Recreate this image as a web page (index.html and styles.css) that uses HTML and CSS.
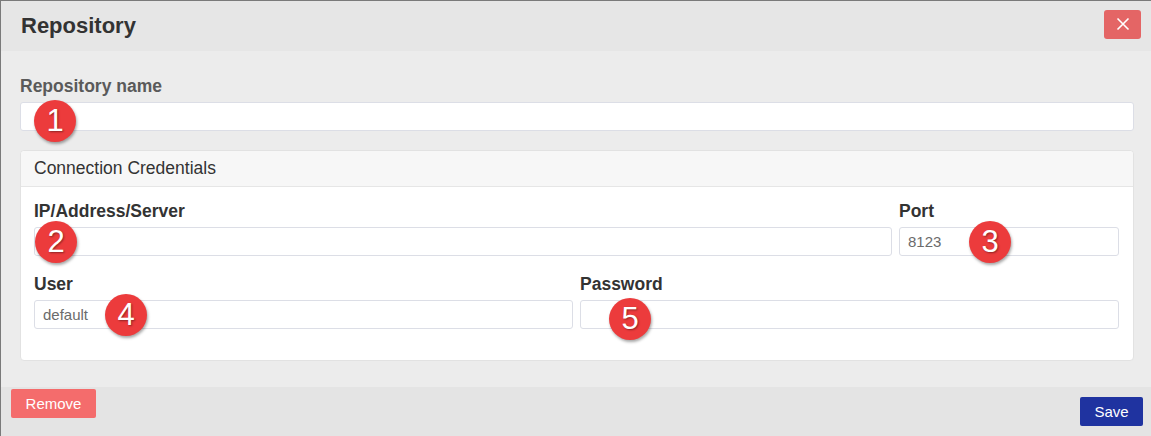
FILE: index.html
```html
<!DOCTYPE html>
<html lang="en">
<head>
    <meta charset="UTF-8">
    <title>Repository</title>
    <link rel="stylesheet" href="styles.css">
</head>
<body>
<div class="modal">
    <div class="modal-header">
        <h2>Repository</h2>
        <button class="close-btn" aria-label="Close">
            <svg width="14" height="14" viewBox="0 0 14 14"><path d="M1.5 1.5 L12.5 12.5 M12.5 1.5 L1.5 12.5" stroke="#fff" stroke-width="1.6" fill="none"/></svg>
        </button>
    </div>

    <div class="modal-body">
        <label class="field-label muted" for="repoName">Repository name</label>
        <input class="field" id="repoName" type="text">

        <div class="panel">
            <div class="panel-heading">Connection Credentials</div>
            <div class="panel-body">
                <div class="row row-server">
                    <div>
                        <label class="field-label" for="server">IP/Address/Server</label>
                        <input class="field" id="server" type="text">
                    </div>
                    <div>
                        <label class="field-label" for="port">Port</label>
                        <input class="field" id="port" type="text" placeholder="8123">
                    </div>
                </div>
                <div class="row row-user">
                    <div>
                        <label class="field-label" for="user">User</label>
                        <input class="field" id="user" type="text" placeholder="default">
                    </div>
                    <div>
                        <label class="field-label" for="password">Password</label>
                        <input class="field" id="password" type="password">
                    </div>
                </div>
            </div>
        </div>
    </div>

    <div class="modal-footer">
        <button class="btn btn-remove">Remove</button>
        <button class="btn btn-save">Save</button>
    </div>

    <!-- numbered callouts -->
    <span class="marker m1">1</span>
    <span class="marker m2">2</span>
    <span class="marker m3">3</span>
    <span class="marker m4">4</span>
    <span class="marker m5">5</span>
</div>
</body>
</html>
```

FILE: styles.css
```css
body {
    margin: 0;
    font-family: "Liberation Sans", Arial, sans-serif;
    background-color: #ececec;
}

.modal {
    position: relative;
    height: 435px;
    border-left: 1px solid #7a7a7a;
    border-top: 1px solid #7a7a7a;
    display: flex;
    flex-direction: column;
    overflow: hidden;
}

.modal-header {
    height: 50px;
    background-color: #e6e6e6;
    display: flex;
    align-items: center;
    justify-content: space-between;
    padding: 0 10px 0 20px;
}

.modal-header h2 {
    margin: 0;
    font-size: 22px;
    font-weight: bold;
    color: #333;
}

.close-btn {
    width: 37px;
    height: 29px;
    margin-top: -4px;
    border: none;
    border-radius: 3px;
    background-color: #e46565;
    display: flex;
    align-items: center;
    justify-content: center;
    padding: 0;
}

.modal-body {
    flex: 1;
    padding: 26px 17px 0 19px;
}

.field-label {
    display: block;
    font-size: 17.5px;
    font-weight: bold;
    line-height: 18px;
    color: #333;
    margin-bottom: 7px;
}

.field-label.muted {
    color: #5a5a5a;
}

.field {
    display: block;
    box-sizing: border-box;
    width: 100%;
    height: 29px;
    border: 1px solid #dcdee6;
    border-radius: 3px;
    background-color: #fff;
    padding: 0 8px;
    font-family: "Liberation Sans", Arial, sans-serif;
    font-size: 15px;
    color: #555;
}

.field::placeholder {
    color: #6b6b6b;
}

.panel {
    margin-top: 19px;
    border: 1px solid #e2e2e2;
    border-radius: 4px;
    background-color: #fff;
}

.panel-heading {
    height: 35px;
    line-height: 35px;
    padding-left: 13px;
    background-color: #f7f7f7;
    border-bottom: 1px solid #e6e6e6;
    border-radius: 4px 4px 0 0;
    font-size: 17.5px;
    color: #333;
}

.panel-body {
    padding: 15px 14px 31px 13px;
}

.row {
    display: grid;
    gap: 7px;
}

.row-server {
    grid-template-columns: 1fr 220px;
}

.row-user {
    grid-template-columns: 1fr 1fr;
    margin-top: 19px;
}

.modal-footer {
    height: 49px;
    background-color: #e4e4e4;
    display: flex;
    justify-content: space-between;
    padding: 0 8px 0 10px;
}

.btn {
    border: none;
    border-radius: 2px;
    color: #fff;
    font-family: "Liberation Sans", Arial, sans-serif;
    font-size: 15px;
    height: 29px;
    padding: 0;
}

.btn-remove {
    width: 85px;
    margin-top: 2px;
    background-color: #f46c6c;
}

.btn-save {
    width: 63px;
    margin-top: 10px;
    background-color: #1f33a0;
}

.marker {
    position: absolute;
    width: 42px;
    height: 42px;
    border-radius: 50%;
    background-color: #ec3b3c;
    color: #fff;
    font-size: 31px;
    line-height: 42px;
    text-align: center;
    box-shadow: 1px 2px 3px rgba(0, 0, 0, 0.35);
    text-shadow: 1px 1px 2px rgba(0, 0, 0, 0.4);
}

.m1 { left: 33px; top: 99px; }
.m2 { left: 34px; top: 220px; }
.m3 { left: 968px; top: 220px; }
.m4 { left: 104px; top: 293px; }
.m5 { left: 608px; top: 297px; }
```
